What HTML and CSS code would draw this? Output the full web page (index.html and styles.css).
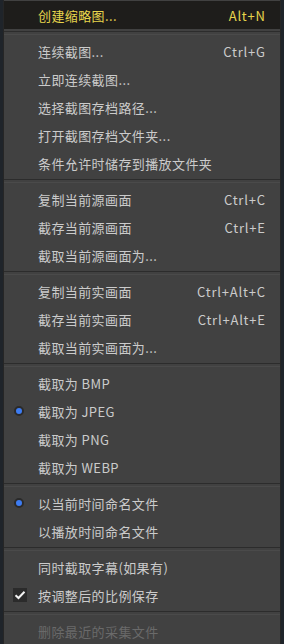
FILE: index.html
```html
<!DOCTYPE html>
<html lang="zh-CN">
<head>
    <meta charset="UTF-8">
    <title>截图菜单</title>
    <link rel="stylesheet" href="styles.css">
</head>
<body>
    <div class="menu">
        <!-- 缩略图 -->
        <div class="item active">
            <span class="mark"></span>
            <span class="label">创建缩略图...</span>
            <span class="key">Alt+N</span>
        </div>
        <div class="sep"></div>

        <!-- 连续截图 -->
        <div class="item">
            <span class="mark"></span>
            <span class="label">连续截图...</span>
            <span class="key">Ctrl+G</span>
        </div>
        <div class="item">
            <span class="mark"></span>
            <span class="label">立即连续截图...</span>
        </div>
        <div class="item">
            <span class="mark"></span>
            <span class="label">选择截图存档路径...</span>
        </div>
        <div class="item">
            <span class="mark"></span>
            <span class="label">打开截图存档文件夹...</span>
        </div>
        <div class="item">
            <span class="mark"></span>
            <span class="label">条件允许时储存到播放文件夹</span>
        </div>
        <div class="sep"></div>

        <!-- 源画面 -->
        <div class="item">
            <span class="mark"></span>
            <span class="label">复制当前源画面</span>
            <span class="key">Ctrl+C</span>
        </div>
        <div class="item">
            <span class="mark"></span>
            <span class="label">截存当前源画面</span>
            <span class="key">Ctrl+E</span>
        </div>
        <div class="item">
            <span class="mark"></span>
            <span class="label">截取当前源画面为...</span>
        </div>
        <div class="sep"></div>

        <!-- 实画面 -->
        <div class="item">
            <span class="mark"></span>
            <span class="label">复制当前实画面</span>
            <span class="key">Ctrl+Alt+C</span>
        </div>
        <div class="item">
            <span class="mark"></span>
            <span class="label">截存当前实画面</span>
            <span class="key">Ctrl+Alt+E</span>
        </div>
        <div class="item">
            <span class="mark"></span>
            <span class="label">截取当前实画面为...</span>
        </div>
        <div class="sep"></div>

        <!-- 格式 -->
        <div class="item">
            <span class="mark"></span>
            <span class="label">截取为 BMP</span>
        </div>
        <div class="item">
            <span class="mark"><span class="dot"></span></span>
            <span class="label">截取为 JPEG</span>
        </div>
        <div class="item">
            <span class="mark"></span>
            <span class="label">截取为 PNG</span>
        </div>
        <div class="item">
            <span class="mark"></span>
            <span class="label">截取为 WEBP</span>
        </div>
        <div class="sep"></div>

        <!-- 命名 -->
        <div class="item">
            <span class="mark"><span class="dot"></span></span>
            <span class="label">以当前时间命名文件</span>
        </div>
        <div class="item">
            <span class="mark"></span>
            <span class="label">以播放时间命名文件</span>
        </div>
        <div class="sep"></div>

        <div class="item">
            <span class="mark"></span>
            <span class="label">同时截取字幕(如果有)</span>
        </div>
        <div class="item">
            <span class="mark">
                <span class="check">
                    <svg width="12" height="10" viewBox="0 0 12 10"><path d="M1.5 5.2 L4.5 8 L10.5 1.8" fill="none" stroke="#f2f2f2" stroke-width="2"/></svg>
                </span>
            </span>
            <span class="label">按调整后的比例保存</span>
        </div>
        <div class="sep"></div>

        <div class="item disabled">
            <span class="mark"></span>
            <span class="label">删除最近的采集文件</span>
        </div>
    </div>
</body>
</html>
```

FILE: styles.css
```css
* {
    box-sizing: border-box;
    margin: 0;
    padding: 0;
}

body {
    background-color: #1f242a;
    font-family: "Noto Sans CJK SC", "Noto Sans", sans-serif;
    font-size: 13px;
    height: 644px;
    overflow: hidden;
}

.menu {
    margin-left: 3px;
    width: 278px;
    background-color: #414141;
    border-left: 1px solid #262626;
    border-right: 1px solid #262626;
    padding-top: 1px;
    min-height: 650px;
}

.item {
    display: flex;
    align-items: center;
    height: 28px;
    padding-right: 15px;
    color: #cbcbcb;
    white-space: nowrap;
}

.mark {
    width: 34px;
    height: 14px;
    flex: none;
    display: flex;
    padding-left: 9px;
}

.label {
    flex: 1;
    letter-spacing: 0.4px;
}

.key {
    letter-spacing: 0.8px;
    margin-right: -0.8px;
}

.active {
    background-color: #1e1d1b;
    color: #e8d54c;
}

.disabled {
    color: #6a6a6a;
}

.sep {
    height: 8px;
    display: flex;
    align-items: center;
}

.sep::after {
    content: "";
    flex: 1;
    height: 2px;
    border-top: 1px solid #2c2c2c;
    border-bottom: 1px solid #4a4a4a;
}

.dot {
    width: 10px;
    height: 10px;
    margin: 2px 0 0 1px;
    border-radius: 50%;
    background-color: #3d7cf2;
    border: 2px solid #2a2a2a;
}

.check {
    width: 14px;
    height: 14px;
    background-color: #2b2b2b;
    display: flex;
    align-items: center;
    justify-content: center;
}
```
